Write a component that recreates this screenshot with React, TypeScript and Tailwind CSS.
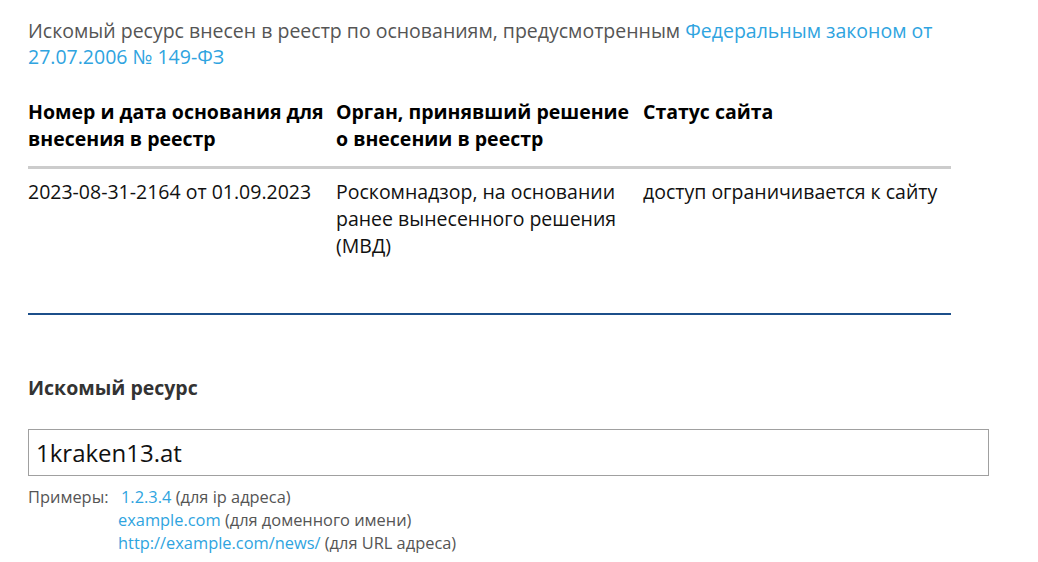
import React from "react";

export default function App() {
  const font = { fontFamily: '"Open Sans", "Noto Sans", sans-serif' };
  return (
    <div className="min-h-screen bg-white" style={font}>
      <div className="pl-[28px] pt-[18px] w-[1010px]">
        <p className="text-[19.5px] leading-[26px] text-[#555555] w-[930px]">
          Искомый ресурс внесен в реестр по основаниям, предусмотренным{" "}
          <a className="text-[#2fa4e0]" href="#">
            Федеральным законом от 27.07.2006 № 149-ФЗ
          </a>
        </p>

        <div className="w-[923px] mt-[28px]">
          <div className="grid grid-cols-[308px_307px_308px] border-b-[3px] border-[#cccccc] pb-[14px] text-[19.5px] leading-[27px] font-bold text-black">
            <div className="pr-[6px]">Номер и дата основания для внесения в реестр</div>
            <div className="pr-[6px]">Орган, принявший решение о внесении в реестр</div>
            <div className="pr-[6px]">Статус сайта</div>
          </div>
          <div className="grid grid-cols-[308px_307px_308px] pt-[9px] pb-[54px] text-[19.5px] leading-[27px] text-[#111111] border-b-2 border-[#1c4f8a]">
            <div className="pr-[6px]">2023-08-31-2164 от 01.09.2023</div>
            <div className="pr-[6px]">Роскомнадзор, на основании ранее вынесенного решения (МВД)</div>
            <div className="pr-[6px]">доступ ограничивается к сайту</div>
          </div>
        </div>

        <h3 className="mt-[60px] text-[19.5px] leading-[26px] font-bold text-[#333333]">Искомый ресурс</h3>

        <div className="mt-[28px] w-[961px] h-[47px] border border-[#a0a0a0] flex items-center pl-[7px] text-[24px] text-[#111111]">
          1kraken13.at
        </div>

        <div className="mt-[9px] flex text-[16.4px] leading-[23px] text-[#555555]">
          <div className="w-[90px]">Примеры:</div>
          <div className="flex flex-col">
            <div className="ml-[3px]">
              <a className="text-[#2fa4e0]" href="#">1.2.3.4</a> (для ip адреса)
            </div>
            <div>
              <a className="text-[#2fa4e0]" href="#">example.com</a> (для доменного имени)
            </div>
            <div>
              <a className="text-[#2fa4e0]" href="#">http://example.com/news/</a> (для URL адреса)
            </div>
          </div>
        </div>
      </div>
    </div>
  );
}
